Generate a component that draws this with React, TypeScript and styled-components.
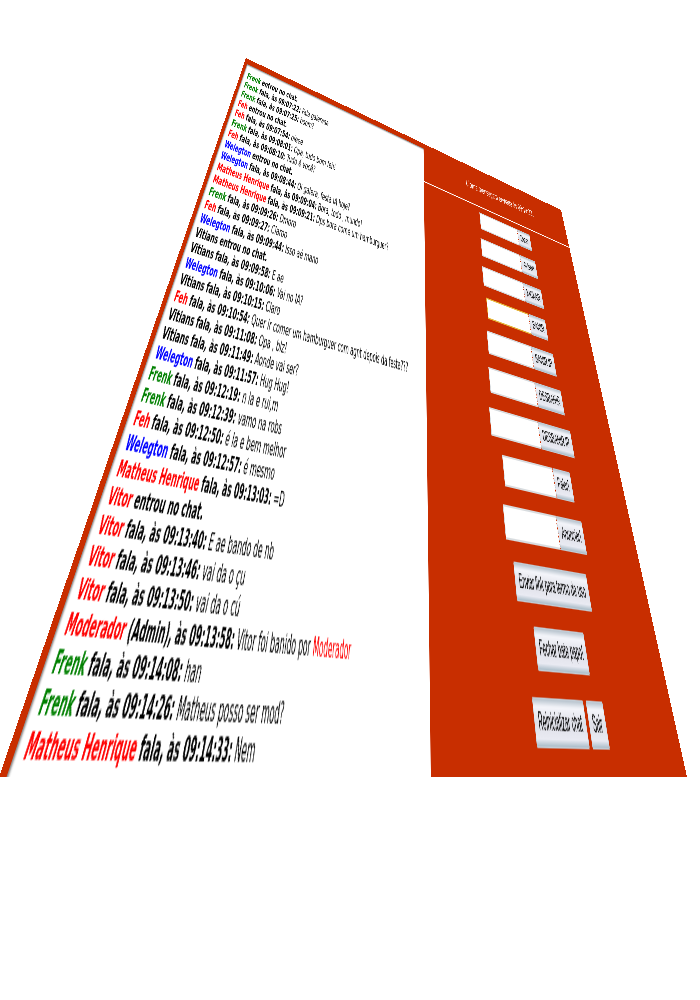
import React, { useLayoutEffect, useState } from "react";
import styled, { createGlobalStyle } from "styled-components";

const PLANE_W = 1366;
const PLANE_H = 692;
const VIEW_W = 700;

type Point = [number, number];

// Corners of the tilted screen in a 700-unit wide view: TL, TR, BR, BL.
const CORNERS: Point[] = [
  [246, 58],
  [561, 210],
  [687, 777],
  [-1, 777],
];

function planeMatrix(scale: number) {
  const [[x0, y0], [x1, y1], [x2, y2], [x3, y3]] = CORNERS.map(([x, y]) => [x * scale, y * scale]);
  const dx1 = x1 - x2;
  const dx2 = x3 - x2;
  const dy1 = y1 - y2;
  const dy2 = y3 - y2;
  const sx = x0 - x1 + x2 - x3;
  const sy = y0 - y1 + y2 - y3;
  const den = dx1 * dy2 - dx2 * dy1;
  const g = (sx * dy2 - dx2 * sy) / den;
  const h = (dx1 * sy - sx * dy1) / den;
  const a = (x1 - x0 + g * x1) / PLANE_W;
  const b = (x3 - x0 + h * x3) / PLANE_H;
  const d = (y1 - y0 + g * y1) / PLANE_W;
  const e = (y3 - y0 + h * y3) / PLANE_H;
  return `matrix3d(${[a, d, 0, g / PLANE_W, b, e, 0, h / PLANE_H, 0, 0, 1, 0, x0, y0, 0, 1].join(",")})`;
}

const GlobalStyle = createGlobalStyle`
  body {
    margin: 0;
    background: #fff;
    font-family: Tahoma, "DejaVu Sans Condensed", "Noto Sans", sans-serif;
  }
`;

const Stage = styled.main`
  width: 100%;
  aspect-ratio: 700 / 777;
  overflow: hidden;
`;

const Plane = styled.div`
  display: flex;
  box-sizing: border-box;
  width: ${PLANE_W}px;
  height: ${PLANE_H}px;
  padding: 11px 0 0 9px;
  background: #c82e00;
  transform-origin: 0 0;
`;

const Chat = styled.section`
  flex: 0 0 680px;
  box-sizing: border-box;
  padding: 13px 12px 0;
  background: #fff;
  box-shadow: inset 3px 3px 3px -1px rgba(0, 0, 0, 0.5);
  overflow: hidden;
`;

const Log = styled.ul`
  margin: 0;
  padding: 0;
  list-style: none;
`;

const Line = styled.li`
  height: 19px;
  font-size: 16px;
  line-height: 19px;
  white-space: nowrap;
`;

const Name = styled.b<{ $color: string }>`
  color: ${(p) => p.$color};
`;

const Meta = styled.b`
  color: #000;
`;

const Mention = styled.span`
  color: #f00;
`;

const Panel = styled.aside`
  flex: 1;
  display: flex;
  flex-direction: column;
`;

const Status = styled.p`
  box-sizing: border-box;
  height: 71px;
  margin: 0;
  padding: 20px 0 0 20px;
  border-bottom: 2px solid #fff;
  color: #fff;
  font-size: 18px;
  line-height: 24px;
  text-align: center;
`;

const Controls = styled.div`
  display: flex;
  flex-direction: column;
  gap: 18px;
  padding: 11px 0 0 30px;
`;

const Row = styled.form<{ $gap?: number }>`
  display: flex;
  justify-content: center;
  gap: ${(p) => p.$gap ?? 0}px;
  height: 32px;
`;

const Field = styled.input<{ $active?: boolean }>`
  box-sizing: border-box;
  width: 174px;
  height: 32px;
  padding: 0 6px;
  border: 2px solid ${(p) => (p.$active ? "#e5b53a" : "#d8dcdf")};
  border-right: 2px dotted #c82e00;
  background: #fff;
  font: 16px "Liberation Sans", Arial, sans-serif;
  outline: none;
`;

const Button = styled.button`
  height: 32px;
  padding: 0 10px;
  border: 1px solid #c3cdd6;
  border-radius: 2px;
  background: linear-gradient(#b7c3cd 0, #f4f5fa 5px, #dfe0e8 50%, #e9eaf2 85%, #a9bcc8 100%);
  color: #000;
  font: 16px "Liberation Sans", Arial, sans-serif;
  white-space: nowrap;
`;

const GREEN = "#008000";
const RED = "#ff0000";
const BLUE = "#0000ff";
const BLACK = "#000000";

type Entry = { name: string; color: string; time?: string; text?: string; admin?: boolean; mention?: string };

const ENTRIES: Entry[] = [
  { name: "Frenk", color: GREEN },
  { name: "Frenk", color: GREEN, time: "09:07:22", text: "Fala galeraaa" },
  { name: "Frenk", color: GREEN, time: "09:07:25", text: "boom?" },
  { name: "Feh", color: RED },
  { name: "Feh", color: RED, time: "09:07:54", text: "oieee" },
  { name: "Frenk", color: GREEN, time: "09:08:01", text: "Opa, tudo bom feh!" },
  { name: "Feh", color: RED, time: "09:08:10", text: "Tudo é você?" },
  { name: "Welegton", color: BLUE },
  { name: "Welegton", color: BLUE, time: "09:08:44", text: "Oi galera, festa IA hoje?" },
  { name: "Matheus Henrique", color: RED, time: "09:09:04", text: "Bora, todo , mundo!" },
  { name: "Matheus Henrique", color: RED, time: "09:09:21", text: "Dps bora come um hamburguer?" },
  { name: "Frenk", color: GREEN, time: "09:09:26", text: "Dmoro" },
  { name: "Feh", color: RED, time: "09:09:27", text: "Claroo" },
  { name: "Welegton", color: BLUE, time: "09:09:44", text: "Isso aé mano" },
  { name: "Vitians", color: BLACK },
  { name: "Vitians", color: BLACK, time: "09:09:58", text: "E ae" },
  { name: "Welegton", color: BLUE, time: "09:10:06", text: "Vai no IA?" },
  { name: "Vitians", color: BLACK, time: "09:10:15", text: "Claro" },
  { name: "Feh", color: RED, time: "09:10:54", text: "Quer ir comer um hamburguer com agnt depois da festa???" },
  { name: "Vitians", color: BLACK, time: "09:11:08", text: "Opa , blz!" },
  { name: "Vitians", color: BLACK, time: "09:11:49", text: "Aonde vai ser?" },
  { name: "Welegton", color: BLUE, time: "09:11:57", text: "Hug Hug!" },
  { name: "Frenk", color: GREEN, time: "09:12:19", text: "n la e rui,m" },
  { name: "Frenk", color: GREEN, time: "09:12:39", text: "vamo na robs" },
  { name: "Feh", color: RED, time: "09:12:50", text: "é la e bem melhor" },
  { name: "Welegton", color: BLUE, time: "09:12:57", text: "é mesmo" },
  { name: "Matheus Henrique", color: RED, time: "09:13:03", text: "=D" },
  { name: "Vitor", color: RED },
  { name: "Vitor", color: RED, time: "09:13:40", text: "E ae bando de nb" },
  { name: "Vitor", color: RED, time: "09:13:46", text: "vai da o çu" },
  { name: "Vitor", color: RED, time: "09:13:50", text: "vai da o cú" },
  { name: "Moderador", color: RED, time: "09:13:58", admin: true, text: "Vitor foi banido por ", mention: "Moderador" },
  { name: "Frenk", color: GREEN, time: "09:14:08", text: "han" },
  { name: "Frenk", color: GREEN, time: "09:14:26", text: "Matheus posso ser mod?" },
  { name: "Matheus Henrique", color: RED, time: "09:14:33", text: "Nem" },
];

const ACTIONS = ["Dizer", "Avisar!", "KICKAR", "BANIR", "BANIR IP", "DESBANIR", "DESBANIR IP", "Falar!", "Anunciar!"];

function describe(entry: Entry) {
  if (!entry.time) return "entrou no chat.";
  return `${entry.admin ? "(Admin)" : "fala"}, às ${entry.time}:`;
}

export default function App() {
  const [scale, setScale] = useState(1);

  useLayoutEffect(() => {
    const update = () => setScale(document.documentElement.clientWidth / VIEW_W);
    update();
    window.addEventListener("resize", update);
    return () => window.removeEventListener("resize", update);
  }, []);

  return (
    <>
      <GlobalStyle />
      <Stage>
        <Plane style={{ transform: planeMatrix(scale) }}>
          <Chat>
            <Log>
              {ENTRIES.map((entry, i) => (
                <Line key={i}>
                  <Name $color={entry.color}>{entry.name}</Name> <Meta>{describe(entry)}</Meta> {entry.text}
                  {entry.mention && <Mention>{entry.mention}</Mention>}
                </Line>
              ))}
            </Log>
          </Chat>
          <Panel>
            <Status>Última mensagem enviada às 09:14:33.</Status>
            <Controls>
              {ACTIONS.map((action) => (
                <Row key={action} onSubmit={(e) => e.preventDefault()}>
                  <Field type="text" aria-label={action} $active={action === "BANIR"} />
                  <Button type="submit">{action}</Button>
                </Row>
              ))}
              <Row onSubmit={(e) => e.preventDefault()}>
                <Button type="button">Enviar link para termo de uso</Button>
              </Row>
              <Row onSubmit={(e) => e.preventDefault()}>
                <Button type="button">Fechar bate papo!</Button>
              </Row>
              <Row $gap={8} onSubmit={(e) => e.preventDefault()}>
                <Button type="button">Reinicializar chat</Button>
                <Button type="button">Sair</Button>
              </Row>
            </Controls>
          </Panel>
        </Plane>
      </Stage>
    </>
  );
}
